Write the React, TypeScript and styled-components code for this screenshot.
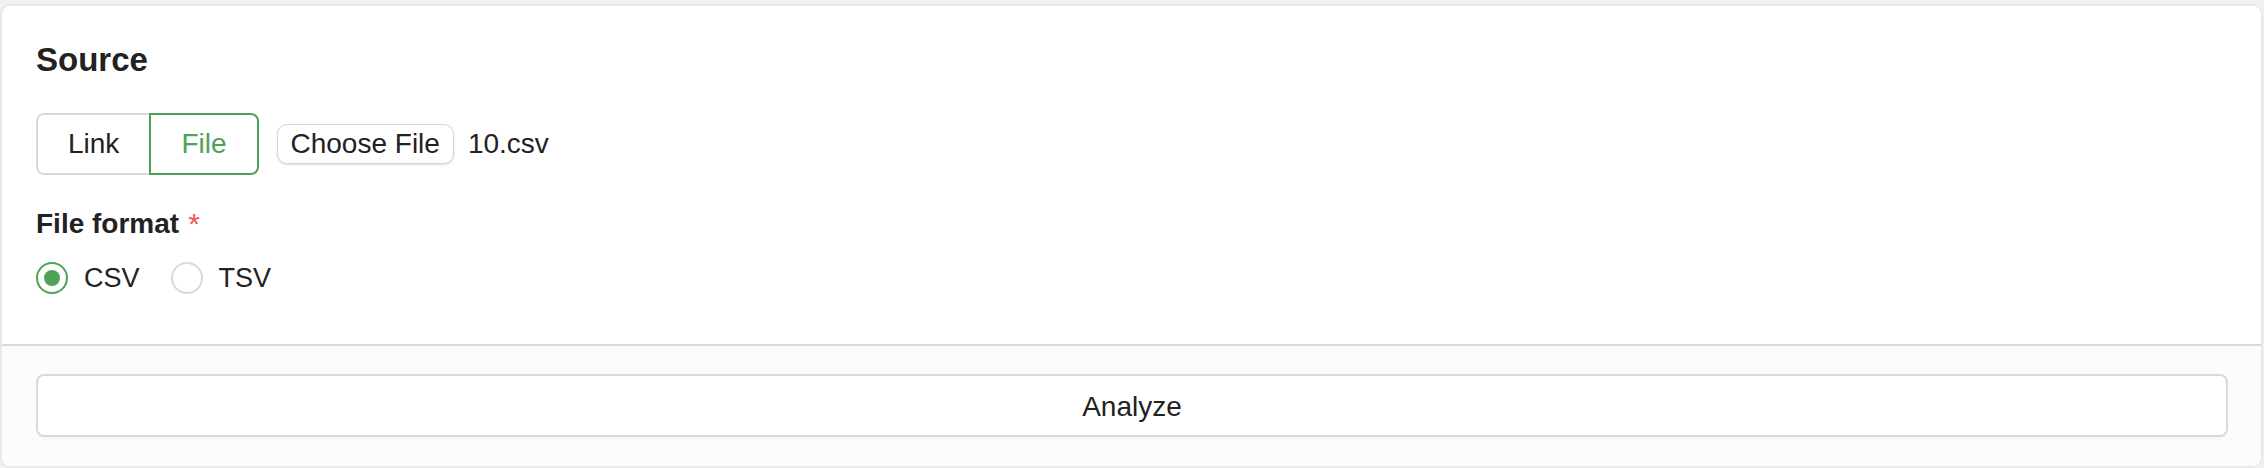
import React, { useState } from "react";
import styled, { createGlobalStyle } from "styled-components";

const GlobalStyle = createGlobalStyle`
  * { box-sizing: border-box; }
  html, body { margin: 0; padding: 0; background: #f0f0f0; }
  body {
    font-family: "Liberation Sans", Arial, Helvetica, sans-serif;
    color: #222;
    -webkit-font-smoothing: antialiased;
  }
`;

const GREEN = "#4ca256";

const Page = styled.div`
  padding: 4px 1px 0 0;
  width: 2264px;
  height: 468px;
`;

const Card = styled.section`
  background: #fff;
  border: 2px solid #e8e8e8;
  border-radius: 10px;
  height: 464px;
  display: flex;
  flex-direction: column;
  overflow: hidden;
`;

const Body = styled.div`
  padding: 34px 34px 0 34px;
  height: 340px;
  display: flex;
  flex-direction: column;
  border-bottom: 2px solid #d9d9d9;
`;

const Heading = styled.h2`
  margin: 0;
  font-size: 33px;
  line-height: 40px;
  font-weight: 700;
  color: #222;
`;

const SourceRow = styled.div`
  margin-top: 33px;
  display: flex;
  align-items: center;
  height: 62px;
`;

const Segmented = styled.div`
  display: flex;
`;

const SegButton = styled.button<{ $active?: boolean; $pos: "first" | "last" }>`
  font-family: inherit;
  font-size: 28px;
  line-height: 40px;
  padding: 9px 30px;
  background: #fff;
  cursor: pointer;
  color: ${(p) => (p.$active ? GREEN : "#222")};
  border: 2px solid ${(p) => (p.$active ? GREEN : "#d9d9d9")};
  border-radius: ${(p) => (p.$pos === "first" ? "8px 0 0 8px" : "0 8px 8px 0")};
  margin-left: ${(p) => (p.$pos === "last" ? "-2px" : "0")};
  position: relative;
  z-index: ${(p) => (p.$active ? 1 : 0)};
`;

const FilePicker = styled.label`
  display: flex;
  align-items: center;
  margin-left: 18px;
  gap: 14px;
`;

const ChooseButton = styled.span`
  display: inline-block;
  font-size: 28px;
  line-height: 38px;
  padding: 0 13px;
  background: #fff;
  border: 1px solid #d6d6d6;
  border-radius: 10px;
  box-shadow: 0 1px 2px rgba(0, 0, 0, 0.14);
  color: #222;
`;

const FileName = styled.span`
  font-size: 28px;
  line-height: 40px;
  color: #222;
`;

const FieldLabel = styled.div`
  margin-top: 29px;
  font-size: 28px;
  line-height: 40px;
  font-weight: 700;
  color: #222;
  display: flex;
  gap: 9px;
`;

const Required = styled.span`
  color: #ec5a50;
  font-weight: 400;
  font-size: 30px;
`;

const RadioRow = styled.div`
  margin-top: 14px;
  display: flex;
  align-items: center;
  gap: 31px;
  height: 40px;
`;

const RadioOption = styled.label`
  display: flex;
  align-items: center;
  gap: 16px;
  font-size: 27px;
  line-height: 40px;
  cursor: pointer;
`;

const RadioCircle = styled.span<{ $checked?: boolean }>`
  width: 32px;
  height: 32px;
  border-radius: 50%;
  border: 2px solid ${(p) => (p.$checked ? GREEN : "#d9d9d9")};
  display: flex;
  align-items: center;
  justify-content: center;
  background: #fff;
  &::after {
    content: "";
    width: 16px;
    height: 16px;
    border-radius: 50%;
    background: ${(p) => (p.$checked ? GREEN : "transparent")};
  }
`;

const Footer = styled.div`
  flex: 1;
  background: #fcfcfc;
  padding: 28px 33px 0 34px;
`;

const AnalyzeButton = styled.button`
  width: 100%;
  font-family: inherit;
  font-size: 28px;
  line-height: 40px;
  padding: 11px 0 8px;
  background: #fff;
  border: 2px solid #d9d9d9;
  border-radius: 8px;
  color: #222;
  box-shadow: 0 3px 0 rgba(0, 0, 0, 0.015);
  cursor: pointer;
`;

export default function App() {
  const [mode, setMode] = useState<"link" | "file">("file");
  const [format, setFormat] = useState<"csv" | "tsv">("csv");
  return (
    <>
      <GlobalStyle />
      <Page>
        <Card>
          <Body>
            <Heading>Source</Heading>
            <SourceRow>
              <Segmented>
                <SegButton $pos="first" $active={mode === "link"} onClick={() => setMode("link")}>
                  Link
                </SegButton>
                <SegButton $pos="last" $active={mode === "file"} onClick={() => setMode("file")}>
                  File
                </SegButton>
              </Segmented>
              <FilePicker>
                <ChooseButton>Choose File</ChooseButton>
                <FileName>10.csv</FileName>
              </FilePicker>
            </SourceRow>
            <FieldLabel>
              File format <Required>*</Required>
            </FieldLabel>
            <RadioRow>
              <RadioOption onClick={() => setFormat("csv")}>
                <RadioCircle $checked={format === "csv"} />
                CSV
              </RadioOption>
              <RadioOption onClick={() => setFormat("tsv")}>
                <RadioCircle $checked={format === "tsv"} />
                TSV
              </RadioOption>
            </RadioRow>
          </Body>
          <Footer>
            <AnalyzeButton>Analyze</AnalyzeButton>
          </Footer>
        </Card>
      </Page>
    </>
  );
}
